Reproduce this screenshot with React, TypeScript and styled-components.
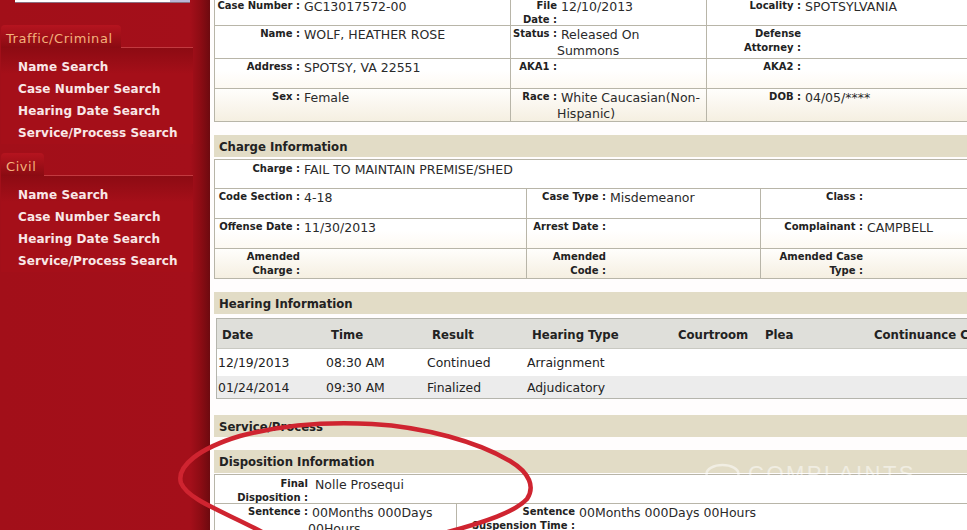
import React from "react";
import styled, { createGlobalStyle } from "styled-components";

const Global = createGlobalStyle`
  html, body { margin: 0; padding: 0; background: #fff; overflow: hidden; }
  * { box-sizing: border-box; }
`;

const Page = styled.div`
  position: relative;
  width: 967px;
  height: 530px;
  overflow: hidden;
  display: flex;
  font-family: "DejaVu Sans", Verdana, sans-serif;
  color: #222;
  background: #fff;
`;

const Sidebar = styled.aside`
  flex: 0 0 210px;
  height: 530px;
  background: linear-gradient(90deg, #a20f19 0, #a40f1a 190px, #8e0c14 200px, #6d0a0f 210px);
  display: flex;
  flex-direction: column;
`;

const SearchBar = styled.div`
  display: flex;
  height: 3px;
  margin: 0 0 22px 15px;
  width: 175px;
  border-bottom: 1px solid #8a6f80;
`;
const SearchInput = styled.div`
  width: 155px;
  background: #fff;
`;
const SearchButton = styled.div`
  flex: 1;
  background: #b9b6d6;
`;

const MenuSection = styled.section`
  margin-left: 1px;
  margin-bottom: 9px;
`;
const MenuTabRow = styled.div`
  display: flex;
  align-items: flex-end;
  width: 192px;
  height: 23px;
`;
const MenuTab = styled.div`
  padding: 0 8px 0 5px;
  height: 23px;
  line-height: 27px;
  font-size: 13px;
  letter-spacing: 0.55px;
  color: #f4b27c;
  border-radius: 4px 4px 0 0;
  background: linear-gradient(180deg, #b5141f, #8a0b12);
  white-space: nowrap;
`;
const MenuRule = styled.div`
  flex: 1;
  height: 1px;
  background: #c23a40;
`;
const MenuBody = styled.ul`
  list-style: none;
  margin: 0;
  padding: 8px 0 0 17px;
  width: 192px;
  height: 96px;
  background: linear-gradient(180deg, #8d0b13 0, #a50f19 26px);
`;
const MenuLink = styled.li`
  height: 22px;
  line-height: 22px;
  font-size: 12px;
  font-weight: 700;
  letter-spacing: 0.1px;
  color: #f9e7e7;
  white-space: nowrap;
`;

const Main = styled.main`
  flex: 1;
  min-width: 0;
  height: 530px;
  padding-left: 4px;
  display: flex;
  flex-direction: column;
  background: #fffdfd;
  overflow: hidden;
`;

const InfoTable = styled.div`
  border: 1px solid #b8b5a8;
  border-right: 0;
  margin-right: -4px;
`;
const Topless = styled(InfoTable)`
  border-top: 0;
  margin-top: -2px;
`;
const Row = styled.div<{ $cols: string; $h: number; $tone?: string; $pt?: number }>`
  display: grid;
  grid-template-columns: ${(p) => p.$cols};
  height: ${(p) => p.$h}px;
  padding-top: ${(p) => p.$pt ?? 0}px;
  background: ${(p) =>
    p.$tone === "beige"
      ? "linear-gradient(180deg, #fffefc 0, #f5efe1 100%)"
      : p.$tone === "soft"
      ? "linear-gradient(180deg, #fff 40%, #fdf9f2 100%)"
      : "#fff"};
  & + & {
    border-top: 1px solid #b8b5a8;
  }
`;
const Cell = styled.div<{ $label: number }>`
  display: grid;
  grid-template-columns: ${(p) => p.$label}px 1fr;
  min-width: 0;
  overflow: hidden;
  & + & {
    border-left: 1px solid #b8b5a8;
  }
`;
const Label = styled.div`
  font-size: 10px;
  font-weight: 700;
  line-height: 14px;
  padding-top: 1px;
  text-align: right;
  color: #222;
`;
const Value = styled.div`
  font-size: 12.5px;
  line-height: 16px;
  padding: 1px 0 0 0;
  text-indent: 4px;
  color: #2a2a2a;
`;
const NudgedText = styled.span`
  margin-left: 3px;
`;

const SectionTitle = styled.h2<{ $mt: number; $mb: number; $h?: number }>`
  margin: ${(p) => p.$mt}px -4px ${(p) => p.$mb}px 0;
  height: ${(p) => p.$h ?? 22}px;
  line-height: 24px;
  padding-left: 5px;
  font-size: 11.7px;
  font-weight: 700;
  color: #222;
  background: #e2dcc6;
  white-space: nowrap;
`;

const HearingTable = styled.div`
  margin: 0 -4px 0 2px;
  border: 1px solid #b5b5ad;
  border-right: 0;
  height: 81px;
`;
const HearingGrid = "108px 101px 100px 146px 87px 109px 1fr";
const HearingHead = styled.div`
  display: grid;
  grid-template-columns: ${HearingGrid};
  height: 30px;
  line-height: 32px;
  background: #dfdfda;
  border-bottom: 1px solid #c9c9c2;
  font-size: 11.7px;
  font-weight: 700;
  white-space: nowrap;
`;
const HeadCell = styled.div`
  padding-left: 6px;
  &:first-child {
    padding-left: 5px;
  }
`;
const HearingRow = styled.div<{ $alt?: boolean; $h: number }>`
  display: grid;
  grid-template-columns: 108px 101px 100px 146px;
  height: ${(p) => p.$h}px;
  line-height: ${(p) => p.$h + 1}px;
  font-size: 12.4px;
  background: ${(p) => (p.$alt ? "#ececec" : "#fff")};
  white-space: nowrap;
`;
const DataCell = styled.div`
  padding-left: 1px;
`;

const Overlay = styled.svg`
  position: absolute;
  inset: 0;
  pointer-events: none;
`;
const Watermark = styled.div`
  position: absolute;
  left: 705px;
  top: 461px;
  display: flex;
  align-items: center;
  gap: 8px;
  color: rgba(255, 255, 255, 0.5);
  font-family: "Liberation Sans", Arial, sans-serif;
  font-size: 22px;
  letter-spacing: 2.5px;
  white-space: nowrap;
`;

const headerCols = "295px 196px 1fr";
const chargeCols = "311px 234px 1fr";

const menus = ["Traffic/Criminal", "Civil"];
const links = ["Name Search", "Case Number Search", "Hearing Date Search", "Service/Process Search"];

const Item = ({ w, label, children }: { w: number; label: React.ReactNode; children?: React.ReactNode }) => (
  <Cell $label={w}>
    <Label>{label}</Label>
    <Value>{children}</Value>
  </Cell>
);

export default function App() {
  return (
    <Page>
      <Global />
      <Sidebar>
        <SearchBar>
          <SearchInput />
          <SearchButton />
        </SearchBar>
        {menus.map((m) => (
          <MenuSection key={m}>
            <MenuTabRow>
              <MenuTab>{m}</MenuTab>
              <MenuRule />
            </MenuTabRow>
            <MenuBody>
              {links.map((l) => (
                <MenuLink key={l}>{l}</MenuLink>
              ))}
            </MenuBody>
          </MenuSection>
        ))}
      </Sidebar>
      <Main>
        <Topless>
          <Row $cols={headerCols} $h={27}>
            <Item w={85} label="Case Number :">GC13017572-00</Item>
            <Item w={46} label={<>File<br />Date :</>}>12/10/2013</Item>
            <Item w={94} label="Locality :">SPOTSYLVANIA</Item>
          </Row>
          <Row $cols={headerCols} $h={33}>
            <Item w={85} label="Name :">WOLF, HEATHER ROSE</Item>
            <Item w={46} label="Status :">Released On<br />Summons</Item>
            <Item w={94} label={<>Defense<br />Attorney :</>} />
          </Row>
          <Row $cols={headerCols} $h={30} $tone="soft">
            <Item w={85} label="Address :">SPOTSY, VA 22551</Item>
            <Item w={46} label="AKA1 :" />
            <Item w={94} label="AKA2 :" />
          </Row>
          <Row $cols={headerCols} $h={33} $tone="beige">
            <Item w={85} label="Sex :">Female</Item>
            <Item w={46} label="Race :">White Caucasian(Non-Hispanic)</Item>
            <Item w={94} label="DOB :">04/05/****</Item>
          </Row>
        </Topless>

        <SectionTitle $mt={13} $mb={2}>Charge Information</SectionTitle>
        <InfoTable>
          <Row $cols="1fr" $h={28} $pt={1}>
            <Item w={85} label="Charge :">FAIL TO MAINTAIN PREMISE/SHED</Item>
          </Row>
          <Row $cols={chargeCols} $h={30}>
            <Item w={85} label="Code Section :">4-18</Item>
            <Item w={79} label="Case Type :">Misdemeanor</Item>
            <Item w={102} label="Class :" />
          </Row>
          <Row $cols={chargeCols} $h={30} $tone="soft">
            <Item w={85} label="Offense Date :">11/30/2013</Item>
            <Item w={79} label="Arrest Date :" />
            <Item w={102} label="Complainant :">CAMPBELL</Item>
          </Row>
          <Row $cols={chargeCols} $h={30} $tone="beige">
            <Item w={85} label={<>Amended<br />Charge :</>} />
            <Item w={79} label={<>Amended<br />Code :</>} />
            <Item w={102} label={<>Amended Case<br />Type :</>} />
          </Row>
        </InfoTable>

        <SectionTitle $mt={13} $mb={4}>Hearing Information</SectionTitle>
        <HearingTable>
          <HearingHead>
            <HeadCell>Date</HeadCell>
            <HeadCell>Time</HeadCell>
            <HeadCell>Result</HeadCell>
            <HeadCell>Hearing Type</HeadCell>
            <HeadCell>Courtroom</HeadCell>
            <HeadCell>Plea</HeadCell>
            <HeadCell>Continuance Code</HeadCell>
          </HearingHead>
          <HearingRow $h={27}>
            <DataCell>12/19/2013</DataCell>
            <DataCell>08:30 AM</DataCell>
            <DataCell>Continued</DataCell>
            <DataCell>Arraignment</DataCell>
          </HearingRow>
          <HearingRow $h={22} $alt>
            <DataCell>01/24/2014</DataCell>
            <DataCell>09:30 AM</DataCell>
            <DataCell>Finalized</DataCell>
            <DataCell>Adjudicatory</DataCell>
          </HearingRow>
        </HearingTable>

        <SectionTitle $mt={16} $mb={13}>Service/Process</SectionTitle>
        <SectionTitle $mt={0} $mb={1} $h={23}>Disposition Information</SectionTitle>
        <InfoTable>
          <Row $cols="1fr" $h={28} $pt={1}>
            <Item w={93} label={<>Final<br />Disposition :</>}>
              <NudgedText>Nolle Prosequi</NudgedText>
            </Item>
          </Row>
          <Row $cols="241px 1fr" $h={40}>
            <Item w={93} label="Sentence :">00Months 000Days 00Hours</Item>
            <Item w={118} label={<>Sentence<br />Suspension Time :</>}>00Months 000Days 00Hours</Item>
          </Row>
        </InfoTable>
      </Main>

      <Watermark>
        <svg width="35" height="22" viewBox="0 0 35 22" fill="none" stroke="currentColor" strokeWidth="2.5">
          <ellipse cx="17.5" cy="11" rx="16" ry="9" />
        </svg>
        COMPLAINTS
      </Watermark>

      <Overlay width="967" height="530" viewBox="0 0 967 530">
        <path
          d="M262 532 C225 512 188 500 181 483 C176 466 200 448 240 436 C285 424 335 422 372 424 C425 427 478 442 510 461 C530 473 535 487 527 499 C515 512 485 522 448 532"
          fill="none"
          stroke="#cf2430"
          strokeWidth="4.5"
          strokeLinecap="round"
        />
      </Overlay>
    </Page>
  );
}
